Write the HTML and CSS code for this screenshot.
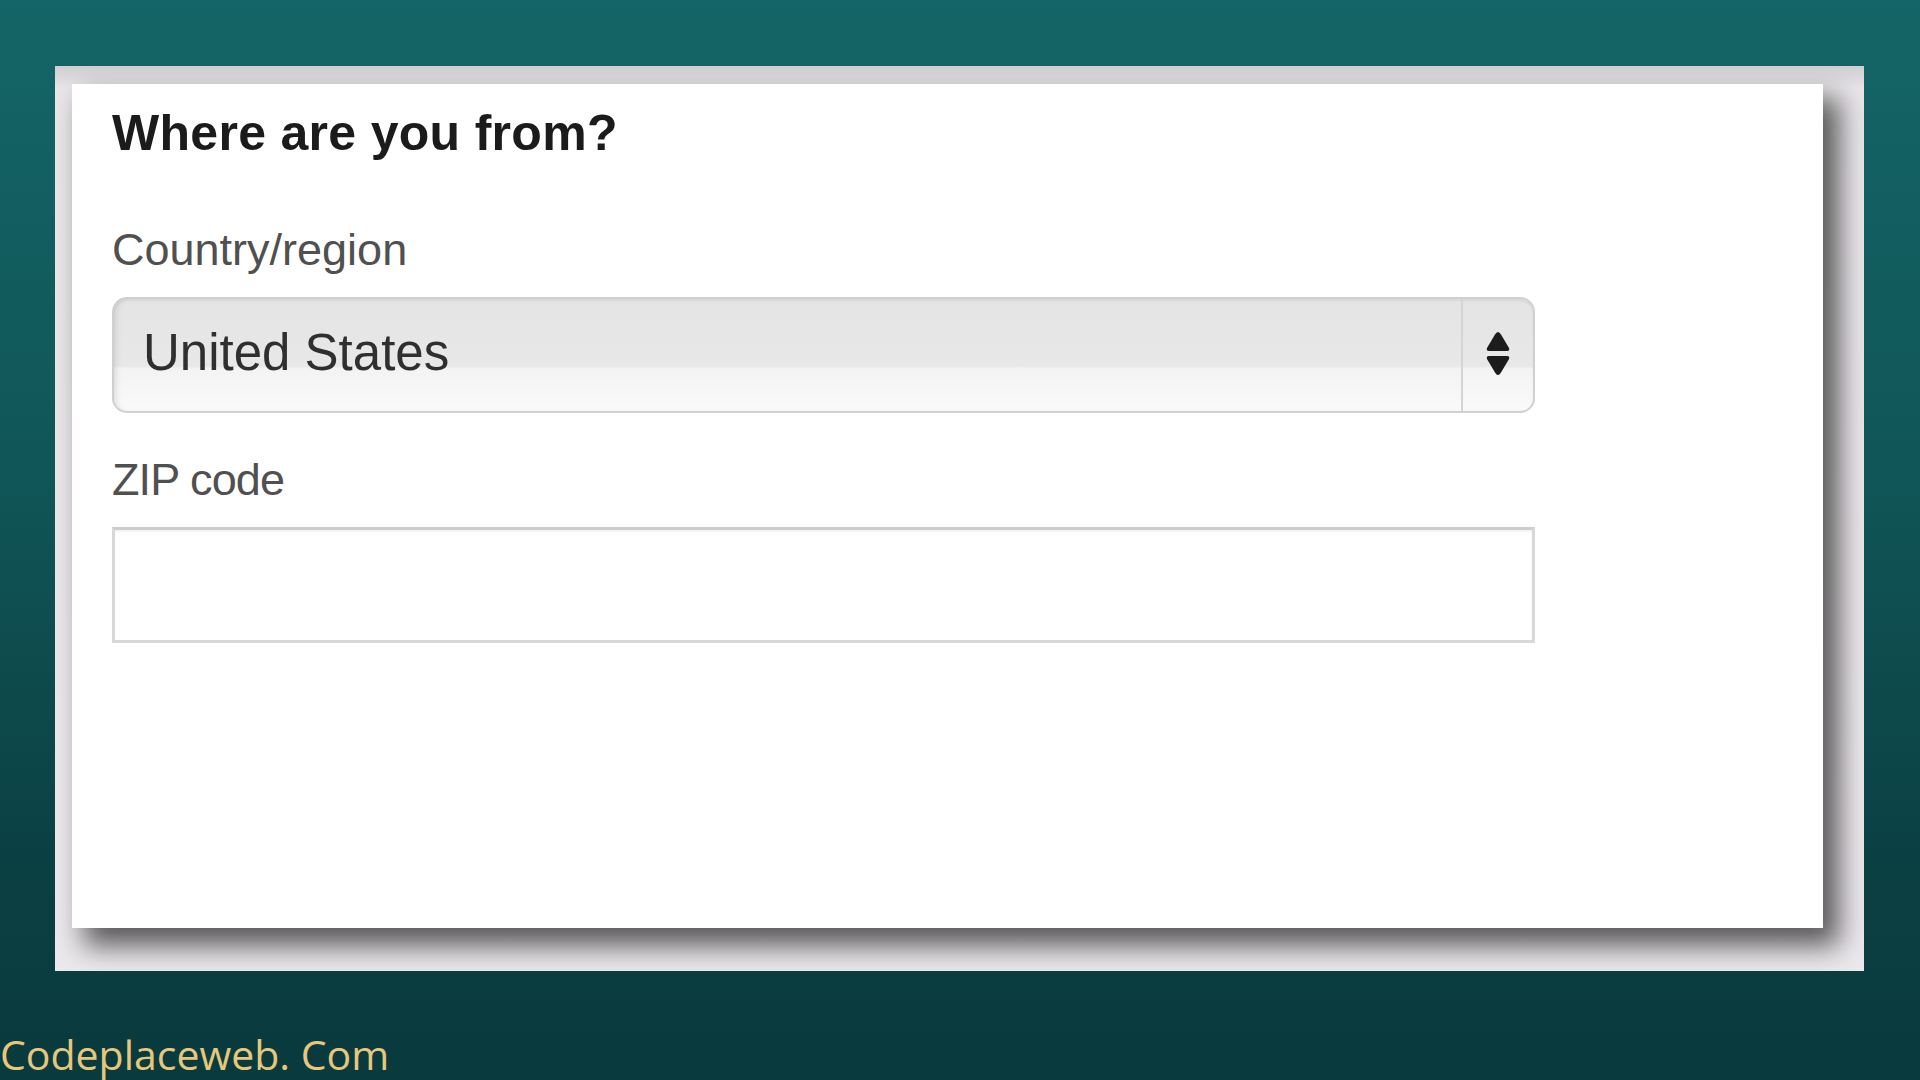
FILE: index.html
```html
<!DOCTYPE html>
<html lang="en">
<head>
<meta charset="utf-8">
<title>Where are you from?</title>
<link rel="stylesheet" href="styles.css">
</head>
<body>
<div class="page">
  <div class="frame">
    <div class="card">
      <h1 class="title">Where are you from?</h1>
      <label class="label label-country">Country/region</label>
      <div class="select">
        <span class="select-value">United States</span>
        <span class="select-arrows">
          <svg width="28" height="48" viewBox="0 0 28 48">
            <path d="M14 2 Q15.5 2 17 4.5 L25 18 Q26 21 23 21 L5 21 Q2 21 3 18 L11 4.5 Q12.5 2 14 2 Z" fill="#1c1c1c"/>
            <path d="M5 26 L23 26 Q26 26 25 29 L17 42.5 Q15.5 45 14 45 Q12.5 45 11 42.5 L3 29 Q2 26 5 26 Z" fill="#1c1c1c"/>
          </svg>
        </span>
      </div>
      <label class="label label-zip">ZIP code</label>
      <input class="zip" type="text">
    </div>
  </div>
  <div class="footer">Codeplaceweb. Com</div>
</div>
</body>
</html>
```
FILE: styles.css
```css
html, body {
  margin: 0;
  padding: 0;
  height: 1080px;
  overflow: hidden;
}
body {
  background: linear-gradient(180deg, #146567 0%, #105557 45%, #0b4043 80%, #093a3d 100%);
  font-family: "Liberation Sans", Arial, sans-serif;
}
.page {
  padding: 66px 0 0 55px;
  display: flex;
  flex-direction: column;
}
.frame {
  width: 1809px;
  height: 905px;
  box-sizing: border-box;
  padding: 18px 0 0 17px;
  background: linear-gradient(180deg, #d0ced1 0px, #dcdadc 12px, #e8e6e8 22px, #ece9ec 100%);
  overflow: hidden;
}
.card {
  width: 1751px;
  height: 844px;
  box-sizing: border-box;
  background: #ffffff;
  padding: 24px 0 0 40px;
  display: flex;
  flex-direction: column;
  box-shadow: 14px 16px 26px 2px rgba(0, 0, 0, 0.62);
}
.title {
  margin: 0;
  font-size: 50px;
  line-height: 50px;
  font-weight: 700;
  color: #1b1b1b;
  letter-spacing: 0.3px;
}
.label {
  display: block;
  font-size: 45px;
  line-height: 45px;
  color: #505050;
  letter-spacing: 0;
}
.label-country {
  margin-top: 69px;
}
.label-zip {
  margin-top: 44px;
  letter-spacing: -0.9px;
}
.select {
  margin-top: 25px;
  width: 1423px;
  height: 116px;
  box-sizing: border-box;
  border: 2px solid #d0d0d0;
  border-radius: 15px;
  background: linear-gradient(180deg, #e4e4e4 0%, #e8e8e8 60%, #f3f3f3 62%, #fafafa 100%);
  box-shadow: inset 7px 0 6px -5px rgba(0, 0, 0, 0.10), inset 0 2px 2px rgba(0, 0, 0, 0.05);
  display: flex;
  align-items: stretch;
}
.select-value {
  flex: 1;
  display: flex;
  align-items: center;
  padding: 0 0 5px 29px;
  font-size: 51px;
  line-height: 51px;
  color: #2f2f2f;
}
.select-arrows {
  width: 70px;
  border-left: 2px solid #d4d4d4;
  display: flex;
  align-items: center;
  justify-content: center;
  padding-bottom: 2px;
}
.zip {
  margin: 25px 0 0 0;
  width: 1423px;
  height: 116px;
  box-sizing: border-box;
  border: 3px solid #d8d8d8;
  border-top-color: #cdcdcd;
  border-radius: 0;
  background: #ffffff;
  box-shadow: inset 0 2px 2px rgba(0, 0, 0, 0.05);
  outline: none;
  font-size: 45px;
  padding: 0 20px;
}
.footer {
  margin-top: 56px;
  font-family: "Open Sans", "Noto Sans", sans-serif;
  font-size: 41px;
  line-height: 54px;
  color: #e6c77c;
  margin-left: -55px;
}
```
